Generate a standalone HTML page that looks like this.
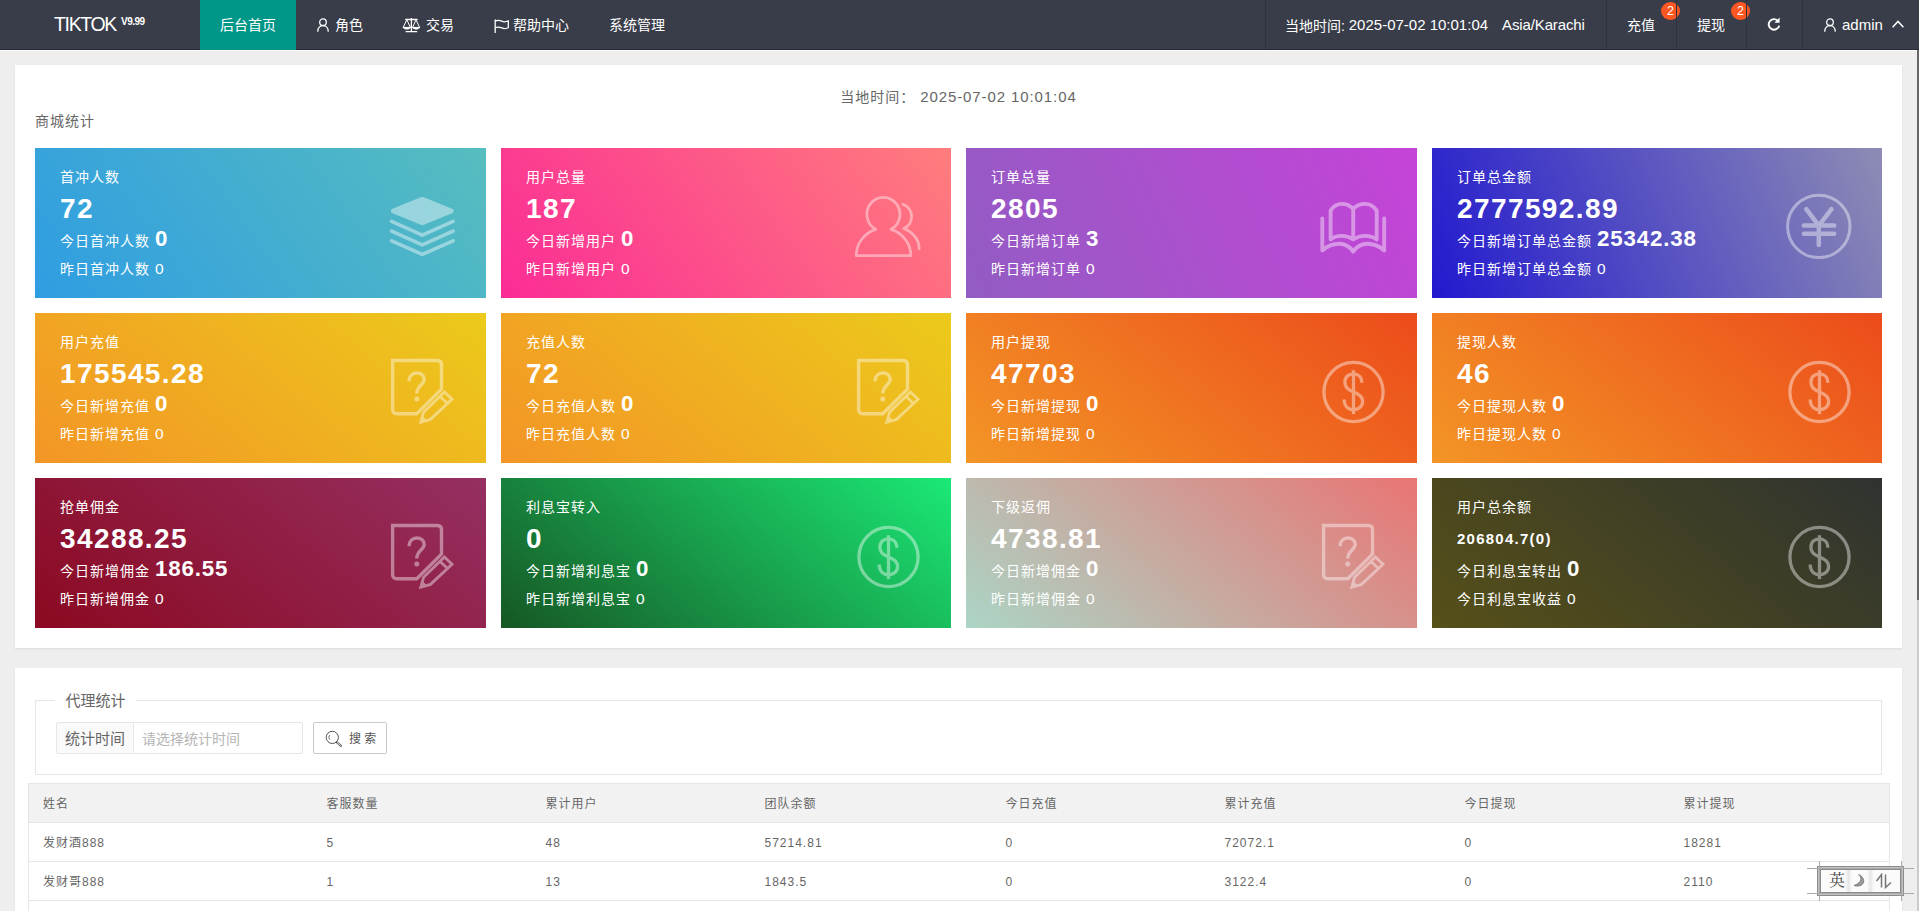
<!DOCTYPE html>
<html lang="zh-CN">
<head>
<meta charset="utf-8">
<title>TIKTOK 后台管理</title>
<style>
*{box-sizing:border-box;margin:0;padding:0}
html,body{width:1919px;height:911px;overflow:hidden}
body{position:relative;background:#eeeeee;font-family:"Liberation Sans","Noto Sans CJK SC",sans-serif;font-size:14px;color:#666}
.abs{position:absolute}
/* header */
.header{position:absolute;left:0;top:0;width:1919px;height:50px;background:#393d49;border-bottom:1px solid #2a2d37;color:#fff}
.hline{position:absolute;left:0;top:50px;width:1917px;height:1px;background:#f7f7f7}
.logo{position:absolute;left:54px;top:0;height:50px;line-height:48px;font-size:19.5px;letter-spacing:-1.35px;color:#fff;white-space:nowrap}
.logo sup{position:absolute;left:67px;top:-3px;font-size:10px;font-weight:bold;letter-spacing:-.5px;line-height:50px}
.nav{position:absolute;top:0;height:50px;line-height:51px;font-size:14px;color:#fff;white-space:nowrap}
.nav.active{background:#009688}
.nav .t{position:absolute;top:0;white-space:nowrap}
.nav svg{position:absolute}
.sep{position:absolute;top:0;width:1px;height:49px;background:#2f323c}
.lat{font-size:15px}
.header .lat{position:relative;top:-1px}
.header .t.lat{position:absolute;top:-1px}
.badge{position:absolute;top:2px;width:19px;height:18px;border-radius:50%;background:#ff5722;color:#fff;font-size:12.5px;line-height:19px;text-align:center}
/* cards */
.card{position:absolute;left:15px;width:1887px;background:#fff;box-shadow:0 1px 2px 0 rgba(0,0,0,.08)}
.time{position:absolute;left:0;width:1887px;top:87px;text-align:center;font-size:14px;letter-spacing:1px;line-height:20px;color:#666;white-space:pre}
.time .lat{font-size:15px;letter-spacing:.9px}
.ttl{position:absolute;left:20px;top:46px;font-size:14px;letter-spacing:1px;line-height:20px;color:#666}
.st{position:absolute;width:451px;height:150px;color:#fff;letter-spacing:1px;font-size:14px;white-space:nowrap;overflow:hidden}
.st .l{position:absolute;left:25px;line-height:20px;height:20px}
.st .l1{top:19px}
.st .l2{top:44px;height:34px;line-height:34px;font-size:28px;font-weight:bold;letter-spacing:1.4px}
.st .l2.sm{font-size:15px;letter-spacing:1.25px}
.st .l3{top:78px;height:30px;line-height:30px}
.st .l3 b{font-size:22.3px;letter-spacing:.85px;margin-left:5px;line-height:0}
.st .l4{top:111px}
.st .l4 span{font-size:15.5px;margin-left:5px}
.st svg{position:absolute;left:352px;top:40px;width:70px;height:70px;overflow:visible;opacity:.42}
.ic{fill:none;stroke:#fff;stroke-linecap:round;stroke-linejoin:round}
.ic.bt{stroke-linecap:butt;stroke-linejoin:miter}
.g1{background:linear-gradient(-125deg,#57bdbf,#2f9de2)}
.g2{background:linear-gradient(-125deg,#ff7d7d,#fb2c95)}
.g3{background:linear-gradient(-113deg,#c543d8,#925cc3)}
.g4{background:linear-gradient(-113deg,#8e8cb4,#2219cf)}
.g5{background:linear-gradient(-141deg,#ecca1b,#f39526)}
.g7{background:linear-gradient(-141deg,#ec4b1b,#f39526)}
.g9{background:linear-gradient(-141deg,#953062,#8b0921)}
.g10{background:linear-gradient(-141deg,#1be976,#165724)}
.g11{background:linear-gradient(-141deg,#e97574,#abd5c5)}
.g12{background:linear-gradient(-141deg,#2f3330,#565018)}
/* search */
.fs{position:absolute;left:20px;top:32px;width:1847px;height:75px;border:1px solid #e6e6e6}
.lg{position:absolute;left:19px;top:-11px;width:81px;height:22px;background:#fff;text-align:center;font-size:15px;line-height:21px;color:#666}
.lbl{position:absolute;left:20px;top:21px;width:78px;height:32px;border:1px solid #e6e6e6;border-radius:2px 0 0 2px;background:#fafafa;text-align:center;font-size:15px;line-height:31px;color:#666}
.inp{position:absolute;left:97px;top:21px;width:170px;height:32px;border:1px solid #e6e6e6;border-radius:0 2px 2px 0;background:#fff;padding-left:8px;font-size:14px;line-height:33px;color:#b5b5b5}
.btn{position:absolute;left:277px;top:21px;width:74px;height:32px;border:1px solid #c9c9c9;border-radius:2px;background:#fff;font-size:12px;color:#555;line-height:32px}
.btn span{position:absolute;left:35px;top:0;letter-spacing:0;white-space:pre}
.btn svg{position:absolute;left:10px;top:5.5px}
/* table */
table{position:absolute;left:13px;top:115px;width:1862px;border-collapse:collapse;table-layout:fixed;font-size:12px;letter-spacing:1px;color:#666}
th,td{height:39px;text-align:left;font-weight:normal;padding:1px 0 0 14px;border-top:1px solid #e6e6e6;border-bottom:1px solid #e6e6e6;line-height:20px;white-space:nowrap}
th{background:#f2f2f2}
table{border-left:1px solid #e6e6e6;border-right:1px solid #e6e6e6}
.sbt{position:absolute;left:1917px;top:50px;width:2px;height:861px;background:#cbcbcb}
.sb{position:absolute;left:1917px;top:50px;width:2px;height:550px;background:#666}
.ime{position:absolute;left:1817px;top:866px;width:87px;height:30px;background:#c2c2c2;border:4px double #8c8c8c;color:#444;white-space:nowrap}
.ime:before{content:"";position:absolute;left:-14px;top:-2px;width:107px;height:24px;border-top:1px solid #aaa;border-bottom:1px solid #aaa}
.ime:after{content:"";position:absolute;left:-2px;top:-9px;width:81px;height:40px;border-left:1px solid #aaa;border-right:1px solid #aaa}
.ime span{position:absolute;top:0;line-height:22px}
.ime i{position:absolute;top:0;width:7px;height:22px;background:linear-gradient(90deg,#fbfbfb,#e6e6e6,#fbfbfb)}
</style>
</head>
<body>
<div class="header">
  <div class="logo">TIKTOK<sup>V9.99</sup></div>
  <div class="nav active" style="left:200px;width:96px"><span class="t" style="left:20px">后台首页</span></div>
  <div class="nav" style="left:296px;width:87px">
    <svg style="left:21px;top:18px" width="12" height="14" viewBox="0 0 12 14"><circle cx="6" cy="4.2" r="3.3" fill="none" stroke="#fff" stroke-width="1.3"/><path d="M.8 13.2C.8 9.8 3 7.6 6 7.6s5.2 2.2 5.2 5.6" fill="none" stroke="#fff" stroke-width="1.3" stroke-linecap="round"/></svg>
    <span class="t" style="left:39px">角色</span></div>
  <div class="nav" style="left:383px;width:90px">
    <svg style="left:19px;top:17px" width="19" height="16" viewBox="0 0 19 16"><g fill="none" stroke="#fff" stroke-width="1.2" stroke-linejoin="round"><path d="M3.2 2.5H15.6M9.4 1V14.6M3.6 14.7H15.2" stroke-width="1.3"/><path d="M4.8 2.8L1.2 10.4H8.4ZM14 2.8L10.6 10.4H17.6Z" stroke-width="1"/><path d="M.8 10.5Q4.8 14.2 8.8 10.5ZM10.2 10.5Q14.1 14.2 18 10.5Z" fill="#fff" stroke-width=".6"/></g></svg>
    <span class="t" style="left:43px">交易</span></div>
  <div class="nav" style="left:473px;width:116px">
    <svg style="left:21px;top:18.6px" width="16" height="14" viewBox="0 0 16 14"><path d="M1.2 .8v12.6M1.2 2.2c2.3-1.3 4.2-.9 6.5 0s4.2 .9 6.6-.4v7c-2.4 1.3-4.3 .9-6.6 0s-4.2-1.3-6.5 0" fill="none" stroke="#fff" stroke-width="1.3" stroke-linecap="round" stroke-linejoin="round"/></svg>
    <span class="t" style="left:40px">帮助中心</span></div>
  <div class="nav" style="left:589px;width:96px"><span class="t" style="left:20px">系统管理</span></div>

  <div class="sep" style="left:1265px"></div>
  <div class="nav" style="left:1266px;width:340px"><span class="t" style="left:19px">当地时间: <span class="lat">2025-07-02 10:01:04</span></span><span class="t lat" style="left:236px;letter-spacing:-.12px">Asia/Karachi</span></div>
  <div class="sep" style="left:1606px"></div>
  <div class="nav" style="left:1607px;width:69px"><span class="t" style="left:20px">充值</span></div>
  <div class="badge" style="left:1661px">2</div>
  <div class="sep" style="left:1676px"></div>
  <div class="nav" style="left:1677px;width:69px"><span class="t" style="left:20px">提现</span></div>
  <div class="badge" style="left:1731px">2</div>
  <div class="sep" style="left:1746px"></div>
  <div class="nav" style="left:1747px;width:55px">
    <svg style="left:19px;top:16.4px" width="16" height="16" viewBox="0 0 16 16"><path d="M12.3 5.3A5.3 5.3 0 1 0 13.2 9.6" fill="none" stroke="#fff" stroke-width="1.9"/><path d="M13.6 1.6v5.2H8.4z" fill="#fff"/></svg></div>
  <div class="sep" style="left:1802px"></div>
  <div class="nav" style="left:1803px;width:114px">
    <svg style="left:21px;top:18px" width="12" height="14" viewBox="0 0 12 14"><circle cx="6" cy="4.2" r="3.3" fill="none" stroke="#fff" stroke-width="1.3"/><path d="M.8 13.2C.8 9.8 3 7.6 6 7.6s5.2 2.2 5.2 5.6" fill="none" stroke="#fff" stroke-width="1.3" stroke-linecap="round"/></svg>
    <span class="t lat" style="left:39px">admin</span>
    <svg style="left:88px;top:19px" width="14" height="10" viewBox="0 0 14 10"><path d="M1.6 8.2L7 2.4l5.4 5.8" fill="none" stroke="#fff" stroke-width="1.4"/></svg></div>
</div>
<div class="hline"></div>

<div class="card" style="top:65px;height:583px">
  <div class="time" style="top:22px">当地时间： <span class="lat">2025-07-02 10:01:04</span></div>
  <div class="ttl">商城统计</div>
  <div class="st g1" style="left:20px;top:83px;width:451px">
    <div class="l l1">首冲人数</div>
    <div class="l l2">72</div>
    <div class="l l3">今日首冲人数<b>0</b></div>
    <div class="l l4">昨日首冲人数<span>0</span></div>
    <svg viewBox="0 0 70 70"><path d="M35.3 11.4L64.1 23.05L35.3 34.7L6.5 23.05Z" fill="#fff" stroke="#fff" stroke-width="5" stroke-linejoin="round"/><g class="ic" stroke-width="3.6"><path d="M4.6 33.4L35.3 47.2L66.1 33.4"/><path d="M4.6 43.1L35.3 56.9L66.1 43.1"/><path d="M4.6 52.8L35.3 66.4L66.1 52.8"/></g></svg>
  </div>
  <div class="st g2" style="left:486px;top:83px;width:450px">
    <div class="l l1">用户总量</div>
    <div class="l l2">187</div>
    <div class="l l3">今日新增用户<b>0</b></div>
    <div class="l l4">昨日新增用户<span>0</span></div>
    <svg viewBox="0 0 70 70"><g class="ic" stroke-width="2.8"><path d="M22.7 41.3A16.5 16.9 0 1 1 38.1 41.3C50 45 57.8 56 57.8 67.7H3.2C3.2 56 11 45 22.7 41.3Z"/><path d="M49.9 16.3A13 13 0 0 1 50.8 40.5C60 44 66.2 52 66.2 60.7"/></g></svg>
  </div>
  <div class="st g3" style="left:951px;top:83px;width:451px">
    <div class="l l1">订单总量</div>
    <div class="l l2">2805</div>
    <div class="l l3">今日新增订单<b>3</b></div>
    <div class="l l4">昨日新增订单<span>0</span></div>
    <svg viewBox="0 0 70 70"><g class="ic" stroke-width="3.9"><path d="M4.3 30.4V62.4Q12 55.8 21 55.8Q30 55.8 35.2 63.7Q40.5 55.8 49.5 55.8Q58.5 55.8 66.2 62.4V30.4"/><path d="M35.2 20.7Q30 15.9 24 15.9Q17 15.9 12.6 22.5V51.4Q17 47.9 23.6 47.9Q30 47.9 35.2 51.4Q40.4 47.9 46.8 47.9Q54 47.9 58.7 51.4V22.5Q54 15.9 46.9 15.9Q40.4 15.9 35.2 20.7V51.4"/></g></svg>
  </div>
  <div class="st g4" style="left:1417px;top:83px;width:450px">
    <div class="l l1">订单总金额</div>
    <div class="l l2">2777592.89</div>
    <div class="l l3">今日新增订单总金额<b>25342.38</b></div>
    <div class="l l4">昨日新增订单总金额<span>0</span></div>
    <svg viewBox="0 0 70 70"><g class="ic"><circle cx="34.8" cy="38.4" r="31.2" stroke-width="3"/><path d="M22.3 21.2L34.8 37.6L47.5 21.2M19.9 37.6H50.2M19.9 45.7H50.2M34.8 37.6V56.9" stroke-width="4.5"/></g></svg>
  </div>
  <div class="st g5" style="left:20px;top:248px;width:451px">
    <div class="l l1">用户充值</div>
    <div class="l l2">175545.28</div>
    <div class="l l3">今日新增充值<b>0</b></div>
    <div class="l l4">昨日新增充值<span>0</span></div>
    <svg viewBox="0 0 70 70"><g class="ic bt" stroke-width="3.4"><path d="M5.6 7.5H50.4Q54.5 7.5 54.5 11.9V36.1L29.8 60.7H9.6Q5.6 60.7 5.6 56.5Z"/><path d="M22 28.2C22 23 25.5 20 29.8 20S37.2 22.8 37.2 26.5C37.2 31.5 29.8 32.5 29.8 40.5"/></g><circle cx="29.8" cy="45.9" r="2.5" fill="#fff"/><g class="ic bt" stroke-width="2.9"><path d="M57.4 39L65 46.2L43.5 66.4L33.8 69.2L36.6 59.2Z"/><path d="M53 43.5L60.6 50.5"/></g><path d="M33.5 69.3L35.4 62.8L40 67.4Z" fill="#fff"/></svg>
  </div>
  <div class="st g5" style="left:486px;top:248px;width:450px">
    <div class="l l1">充值人数</div>
    <div class="l l2">72</div>
    <div class="l l3">今日充值人数<b>0</b></div>
    <div class="l l4">昨日充值人数<span>0</span></div>
    <svg viewBox="0 0 70 70"><g class="ic bt" stroke-width="3.4"><path d="M5.6 7.5H50.4Q54.5 7.5 54.5 11.9V36.1L29.8 60.7H9.6Q5.6 60.7 5.6 56.5Z"/><path d="M22 28.2C22 23 25.5 20 29.8 20S37.2 22.8 37.2 26.5C37.2 31.5 29.8 32.5 29.8 40.5"/></g><circle cx="29.8" cy="45.9" r="2.5" fill="#fff"/><g class="ic bt" stroke-width="2.9"><path d="M57.4 39L65 46.2L43.5 66.4L33.8 69.2L36.6 59.2Z"/><path d="M53 43.5L60.6 50.5"/></g><path d="M33.5 69.3L35.4 62.8L40 67.4Z" fill="#fff"/></svg>
  </div>
  <div class="st g7" style="left:951px;top:248px;width:451px">
    <div class="l l1">用户提现</div>
    <div class="l l2">47703</div>
    <div class="l l3">今日新增提现<b>0</b></div>
    <div class="l l4">昨日新增提现<span>0</span></div>
    <svg viewBox="0 0 70 70"><g class="ic bt"><circle cx="35.5" cy="39" r="29.6" stroke-width="3.3"/><path d="M35.5 17.2V61.1" stroke-width="3.3"/><path d="M43.8 29.8C43.8 24 40 20.8 35.5 20.8C30.5 20.8 26.9 24 26.9 29C26.9 35 31 37 35.5 39C40 41 44.6 43 44.6 48.5C44.6 53.5 40.5 56.6 35.5 56.6C30 56.6 26.2 53 26.2 46.5" stroke-width="3.3"/></g></svg>
  </div>
  <div class="st g7" style="left:1417px;top:248px;width:450px">
    <div class="l l1">提现人数</div>
    <div class="l l2">46</div>
    <div class="l l3">今日提现人数<b>0</b></div>
    <div class="l l4">昨日提现人数<span>0</span></div>
    <svg viewBox="0 0 70 70"><g class="ic bt"><circle cx="35.5" cy="39" r="29.6" stroke-width="3.3"/><path d="M35.5 17.2V61.1" stroke-width="3.3"/><path d="M43.8 29.8C43.8 24 40 20.8 35.5 20.8C30.5 20.8 26.9 24 26.9 29C26.9 35 31 37 35.5 39C40 41 44.6 43 44.6 48.5C44.6 53.5 40.5 56.6 35.5 56.6C30 56.6 26.2 53 26.2 46.5" stroke-width="3.3"/></g></svg>
  </div>
  <div class="st g9" style="left:20px;top:413px;width:451px">
    <div class="l l1">抢单佣金</div>
    <div class="l l2">34288.25</div>
    <div class="l l3">今日新增佣金<b>186.55</b></div>
    <div class="l l4">昨日新增佣金<span>0</span></div>
    <svg viewBox="0 0 70 70"><g class="ic bt" stroke-width="3.4"><path d="M5.6 7.5H50.4Q54.5 7.5 54.5 11.9V36.1L29.8 60.7H9.6Q5.6 60.7 5.6 56.5Z"/><path d="M22 28.2C22 23 25.5 20 29.8 20S37.2 22.8 37.2 26.5C37.2 31.5 29.8 32.5 29.8 40.5"/></g><circle cx="29.8" cy="45.9" r="2.5" fill="#fff"/><g class="ic bt" stroke-width="2.9"><path d="M57.4 39L65 46.2L43.5 66.4L33.8 69.2L36.6 59.2Z"/><path d="M53 43.5L60.6 50.5"/></g><path d="M33.5 69.3L35.4 62.8L40 67.4Z" fill="#fff"/></svg>
  </div>
  <div class="st g10" style="left:486px;top:413px;width:450px">
    <div class="l l1">利息宝转入</div>
    <div class="l l2">0</div>
    <div class="l l3">今日新增利息宝<b>0</b></div>
    <div class="l l4">昨日新增利息宝<span>0</span></div>
    <svg viewBox="0 0 70 70"><g class="ic bt"><circle cx="35.5" cy="39" r="29.6" stroke-width="3.3"/><path d="M35.5 17.2V61.1" stroke-width="3.3"/><path d="M43.8 29.8C43.8 24 40 20.8 35.5 20.8C30.5 20.8 26.9 24 26.9 29C26.9 35 31 37 35.5 39C40 41 44.6 43 44.6 48.5C44.6 53.5 40.5 56.6 35.5 56.6C30 56.6 26.2 53 26.2 46.5" stroke-width="3.3"/></g></svg>
  </div>
  <div class="st g11" style="left:951px;top:413px;width:451px">
    <div class="l l1">下级返佣</div>
    <div class="l l2">4738.81</div>
    <div class="l l3">今日新增佣金<b>0</b></div>
    <div class="l l4">昨日新增佣金<span>0</span></div>
    <svg viewBox="0 0 70 70"><g class="ic bt" stroke-width="3.4"><path d="M5.6 7.5H50.4Q54.5 7.5 54.5 11.9V36.1L29.8 60.7H9.6Q5.6 60.7 5.6 56.5Z"/><path d="M22 28.2C22 23 25.5 20 29.8 20S37.2 22.8 37.2 26.5C37.2 31.5 29.8 32.5 29.8 40.5"/></g><circle cx="29.8" cy="45.9" r="2.5" fill="#fff"/><g class="ic bt" stroke-width="2.9"><path d="M57.4 39L65 46.2L43.5 66.4L33.8 69.2L36.6 59.2Z"/><path d="M53 43.5L60.6 50.5"/></g><path d="M33.5 69.3L35.4 62.8L40 67.4Z" fill="#fff"/></svg>
  </div>
  <div class="st g12" style="left:1417px;top:413px;width:450px">
    <div class="l l1">用户总余额</div>
    <div class="l l2 sm">206804.7(0)</div>
    <div class="l l3">今日利息宝转出<b>0</b></div>
    <div class="l l4">今日利息宝收益<span>0</span></div>
    <svg viewBox="0 0 70 70"><g class="ic bt"><circle cx="35.5" cy="39" r="29.6" stroke-width="3.3"/><path d="M35.5 17.2V61.1" stroke-width="3.3"/><path d="M43.8 29.8C43.8 24 40 20.8 35.5 20.8C30.5 20.8 26.9 24 26.9 29C26.9 35 31 37 35.5 39C40 41 44.6 43 44.6 48.5C44.6 53.5 40.5 56.6 35.5 56.6C30 56.6 26.2 53 26.2 46.5" stroke-width="3.3"/></g></svg>
  </div>
</div>

<div class="card" style="top:668px;height:260px">
  <div class="fs"><div class="lg">代理统计</div>
    <div class="lbl">统计时间</div><div class="inp">请选择统计时间</div>
    <div class="btn"><svg width="20" height="20" viewBox="0 0 20 20"><circle cx="8.3" cy="8.4" r="6.1" fill="none" stroke="#555" stroke-width="1"/><path d="M5.6 6.2A3.4 3.4 0 0 0 5.8 10.6" fill="none" stroke="#555" stroke-width=".9"/><path d="M12.8 13.2L16.8 16.8" stroke="#555" stroke-width="2.2" stroke-linecap="round"/><path d="M13.3 13.7L16.4 16.4" stroke="#fff" stroke-width=".8" stroke-linecap="round"/></svg><span>搜 索</span></div>
  </div>
  <table><colgroup><col style="width:284px"><col style="width:219px"><col style="width:219px"><col style="width:241px"><col style="width:219px"><col style="width:240px"><col style="width:219px"><col></colgroup>
    <thead><tr><th>姓名</th><th>客服数量</th><th>累计用户</th><th>团队余额</th><th>今日充值</th><th>累计充值</th><th>今日提现</th><th>累计提现</th></tr></thead>
    <tbody>
      <tr><td>发财酒888</td><td>5</td><td>48</td><td>57214.81</td><td>0</td><td>72072.1</td><td>0</td><td>18281</td></tr>
      <tr><td>发财哥888</td><td>1</td><td>13</td><td>1843.5</td><td>0</td><td>3122.4</td><td>0</td><td>2110</td></tr>
      <tr><td>&nbsp;</td><td></td><td></td><td></td><td></td><td></td><td></td><td></td></tr>
    </tbody></table>
</div>
<div class="sbt"></div><div class="sb"></div>
<div class="ime"><b style="position:absolute;left:0;top:0;width:79px;height:22px;background:#fbfbfb"></b><i style="left:24px"></i><i style="left:46px"></i><span style="left:8px;font-family:'Liberation Serif','Noto Serif CJK SC',serif;font-size:16px">英</span><svg style="position:absolute;left:30px;top:3px" width="16" height="16" viewBox="0 0 16 16"><path d="M7.5 1.5C11 4 11.5 9.5 3 12.5C9 14.5 14 11 12.5 6.5C11.8 4 9.8 2.3 7.5 1.5Z" fill="#9a9a9a" stroke="#666" stroke-width=".7"/></svg><svg style="position:absolute;left:54px;top:3px" width="18" height="16" viewBox="0 0 18 16"><path d="M1.5 8L6.5 1.5V14.5M10.5 1.5V14.5L16 9.5" fill="none" stroke="#777" stroke-width="1.5"/></svg></div>
</body>
</html>
